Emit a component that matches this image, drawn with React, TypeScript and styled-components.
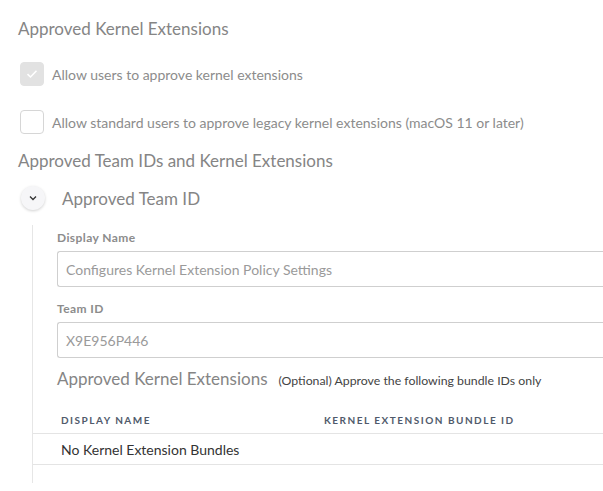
import React from "react";
import styled, { createGlobalStyle } from "styled-components";

const Global = createGlobalStyle`
  html, body { margin: 0; padding: 0; background: #fff; }
  body { font-family: Lato, "Open Sans", sans-serif; overflow: hidden; }
  * { box-sizing: border-box; }
`;

const Page = styled.div`
  width: 603px;
  height: 491px;
  overflow: hidden;
  padding: 18px 0 0 18px;
  display: flex;
  flex-direction: column;
`;

const Heading = styled.h2<{ $mt?: number }>`
  margin: ${(p) => p.$mt ?? 0}px 0 0 0;
  font-size: 17px;
  font-weight: 400;
  color: #858585;
  line-height: 22px;
`;

const CheckRow = styled.label<{ $mt: number }>`
  display: flex;
  align-items: center;
  gap: 8px;
  margin: ${(p) => p.$mt}px 0 0 2px;
  font-size: 14px;
  color: #8c8c8c;
`;

const Box = styled.span<{ $checked?: boolean }>`
  width: 24px;
  height: 24px;
  border-radius: 4px;
  border: 1px solid ${(p) => (p.$checked ? "#e2e2e2" : "#d6d6d6")};
  background: ${(p) => (p.$checked ? "#e2e2e2" : "#fff")};
  display: flex;
  align-items: center;
  justify-content: center;
  flex: none;
`;

const AccordionHead = styled.div`
  display: flex;
  align-items: center;
  gap: 17px;
  margin: 14px 0 0 3px;
`;

const CircleBtn = styled.span`
  width: 24px;
  height: 24px;
  border-radius: 50%;
  background: #f6f6f8;
  box-shadow: 0 1px 3px rgba(0, 0, 0, 0.18);
  display: flex;
  align-items: center;
  justify-content: center;
`;

const SubTitle = styled.div`
  font-size: 17px;
  color: #858585;
`;

const Body = styled.div`
  margin: 15px 0 0 14px;
  border-left: 1px solid #e6e6e6;
  padding: 6px 0 18px 24px;
  display: flex;
  flex-direction: column;
`;

const FieldLabel = styled.div<{ $mt?: number }>`
  font-size: 12px;
  font-weight: 700;
  letter-spacing: 0.4px;
  color: #8c8c8c;
  margin-top: ${(p) => p.$mt ?? 0}px;
  line-height: 14px;
`;

const Input = styled.div`
  margin-top: 6px;
  height: 36px;
  border: 1px solid #cfcfcf;
  border-right: none;
  border-radius: 3px 0 0 3px;
  display: flex;
  align-items: center;
  padding-left: 8px;
  font-size: 14px;
  color: #9a9a9a;
  width: 560px;
`;

const SectionRow = styled.div`
  display: flex;
  align-items: baseline;
  gap: 11px;
  margin-top: 10px;
`;

const SectionTitle = styled.span`
  font-size: 17px;
  color: #858585;
`;

const Hint = styled.span`
  font-size: 12.3px;
  color: #444;
`;

const Table = styled.div`
  margin: 18px 0 0 -24px;
  width: 600px;
`;

const Row = styled.div<{ $head?: boolean }>`
  display: grid;
  grid-template-columns: 263px 1fr;
  padding-left: 28px;
  height: ${(p) => (p.$head ? 27 : 31)}px;
  align-items: center;
  border-bottom: 1px solid #e4e4e4;
`;

const Th = styled.span`
  font-size: 10px;
  font-weight: 700;
  letter-spacing: 1.5px;
  color: #505a6b;
`;

const Td = styled.span`
  font-size: 14px;
  color: #333;
`;

export default function App() {
  return (
    <Page>
      <Global />
      <Heading>Approved Kernel Extensions</Heading>
      <CheckRow $mt={22}>
        <Box $checked>
          <svg width="12" height="10" viewBox="0 0 12 10">
            <path d="M1.5 5.2 L4.5 8 L10.5 1.8" fill="none" stroke="#fff" strokeWidth="1.6" />
          </svg>
        </Box>
        Allow users to approve kernel extensions
      </CheckRow>
      <CheckRow $mt={24}>
        <Box />
        Allow standard users to approve legacy kernel extensions (macOS 11 or later)
      </CheckRow>
      <Heading $mt={16}>Approved Team IDs and Kernel Extensions</Heading>
      <AccordionHead>
        <CircleBtn>
          <svg width="8" height="6" viewBox="0 0 8 6">
            <path d="M1 1.5 L4 4.5 L7 1.5" fill="none" stroke="#333" strokeWidth="1.3" />
          </svg>
        </CircleBtn>
        <SubTitle>Approved Team ID</SubTitle>
      </AccordionHead>
      <Body>
        <FieldLabel>Display Name</FieldLabel>
        <Input>Configures Kernel Extension Policy Settings</Input>
        <FieldLabel $mt={15}>Team ID</FieldLabel>
        <Input>X9E956P446</Input>
        <SectionRow>
          <SectionTitle>Approved Kernel Extensions</SectionTitle>
          <Hint>(Optional) Approve the following bundle IDs only</Hint>
        </SectionRow>
        <Table>
          <Row $head>
            <Th>DISPLAY NAME</Th>
            <Th>KERNEL EXTENSION BUNDLE ID</Th>
          </Row>
          <Row>
            <Td>No Kernel Extension Bundles</Td>
            <span />
          </Row>
        </Table>
      </Body>
    </Page>
  );
}
